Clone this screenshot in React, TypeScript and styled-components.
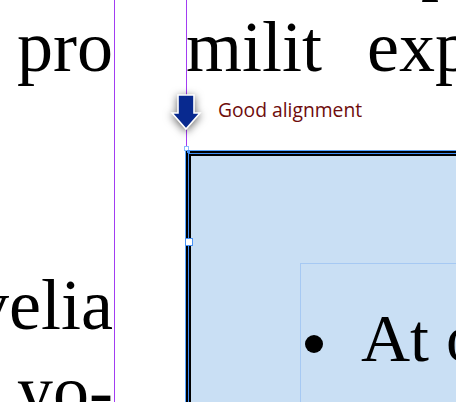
import React from "react";
import styled, { createGlobalStyle } from "styled-components";

const GlobalStyle = createGlobalStyle`
  html, body { margin: 0; padding: 0; background: #ffffff; }
  #root { width: 456px; height: 402px; }
`;

const GUIDE = "#a23cf2";

const Page = styled.div`
  position: relative;
  width: 456px;
  height: 402px;
  overflow: hidden;
  background: #ffffff;
  display: grid;
  grid-template-columns: 115px 71px 1fr;
  font-family: "Liberation Serif", "Times New Roman", serif;
  color: #000;
`;

const LeftColumn = styled.div`
  border-right: 1px solid ${GUIDE};
  padding: 4px 1px 0 0;
  display: flex;
  flex-direction: column;
  min-width: 0;
`;

const TextLine = styled.div<{ $align?: "start" | "end" }>`
  height: 86px;
  flex: none;
  display: flex;
  justify-content: ${(p) => (p.$align === "end" ? "flex-end" : "flex-start")};
  align-items: flex-start;
  font-size: 72px;
  line-height: 86px;
  white-space: nowrap;
`;

const PrevLine = styled(TextLine)`
  margin-top: -84px;
  padding-left: 234px;
`;

const Gutter = styled.div``;

const RightColumn = styled.div`
  border-left: 1px solid ${GUIDE};
  padding-top: 4px;
  display: flex;
  flex-direction: column;
  min-width: 0;
`;

const WordRow = styled(TextLine)`
  gap: 45px;
  margin-left: -1px;
  margin-top: -2px;
`;

const Frame = styled.div`
  flex: none;
  margin: 60px 0 0 -2px;
  width: 320px;
  height: 300px;
  background: #c9dff4;
  border: 1px solid #5aa6ff;
  box-shadow: inset 0 0 0 2px #000, inset 0 0 0 3px #3f8ef5, inset 0 0 0 5px #000;
  padding: 112px 0 0 114px;
  box-sizing: border-box;
`;

const InnerFrame = styled.div`
  border: 1px solid #a6c9f3;
  height: 200px;
  display: flex;
  align-items: flex-start;
  padding: 34px 0 0 4px;
  box-sizing: border-box;
`;

const Bullet = styled.span`
  flex: none;
  width: 18px;
  height: 18px;
  border-radius: 50%;
  background: #000;
  margin-top: 37px;
  margin-right: 38px;
`;

const BulletText = styled.span`
  font-size: 68px;
  line-height: 80px;
  white-space: nowrap;
`;

const ArrowMark = styled.svg`
  position: absolute;
  left: 166px;
  top: 90px;
  width: 40px;
  height: 44px;
  overflow: visible;
  filter: drop-shadow(0 2px 4px rgba(0, 0, 0, 0.6));
`;

const Label = styled.div`
  position: absolute;
  left: 218px;
  top: 96px;
  font-family: "Open Sans", "Noto Sans", sans-serif;
  font-size: 19.3px;
  line-height: 27px;
  color: #6e0c0c;
  white-space: nowrap;
`;

const CornerHandle = styled.div`
  position: absolute;
  left: 184px;
  top: 146px;
  width: 3px;
  height: 3px;
  border: 1px solid #8abcff;
  background: #fff;
`;

const CornerDot = styled.div`
  position: absolute;
  left: 187px;
  top: 150px;
  width: 3px;
  height: 3px;
  background: #3f8ef5;
`;

const SideHandle = styled.div`
  position: absolute;
  left: 185px;
  top: 238px;
  width: 6px;
  height: 6px;
  border: 1.5px solid #4a93f5;
  background: #fff;
`;

export default function App() {
  return (
    <>
      <GlobalStyle />
      <Page>
        <LeftColumn>
          <TextLine $align="end">pro</TextLine>
          <TextLine $align="end" />
          <TextLine $align="end" />
          <TextLine $align="end">velia</TextLine>
          <TextLine $align="end">yo-</TextLine>
        </LeftColumn>
        <Gutter />
        <RightColumn>
          <PrevLine>p</PrevLine>
          <WordRow>
            <span>milit</span>
            <span>exp</span>
          </WordRow>
          <Frame>
            <InnerFrame>
              <Bullet />
              <BulletText>At o</BulletText>
            </InnerFrame>
          </Frame>
        </RightColumn>

        <ArrowMark viewBox="0 0 40 44">
          <path
            d="M12 5 H28 V23 H34 L20 39 L6 23 H12 Z"
            fill="#08298f"
            stroke="#ffffff"
            strokeWidth="1.6"
            strokeLinejoin="miter"
          />
        </ArrowMark>
        <Label>Good alignment</Label>
        <CornerHandle />
        <CornerDot />
        <SideHandle />
      </Page>
    </>
  );
}
